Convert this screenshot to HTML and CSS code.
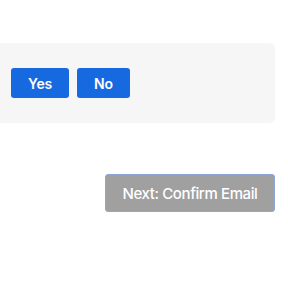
FILE: index.html
```html
<!DOCTYPE html>
<html>
<head>
<meta charset="utf-8">
<link rel="stylesheet" href="styles.css">
</head>
<body>
<div class="page">
  <div class="panel">
    <button class="btn choice yes">Yes</button>
    <button class="btn choice no">No</button>
  </div>
  <div class="footer">
    <button class="btn next" disabled>Next: Confirm Email</button>
  </div>
</div>
</body>
</html>
```
FILE: styles.css
```css
html, body {
  margin: 0;
  padding: 0;
  background: #ffffff;
  font-family: Inter, "Liberation Sans", sans-serif;
}
.page {
  width: 275px;
  padding-top: 43px;
}
.panel {
  margin-left: -10px;
  height: 80px;
  box-sizing: border-box;
  padding-left: 21px;
  background: #f6f6f6;
  border-radius: 5px;
  display: flex;
  align-items: center;
  gap: 8px;
}
.btn {
  font-family: Inter, "Liberation Sans", sans-serif;
  color: #ffffff;
  border: none;
  margin: 0;
  cursor: pointer;
}
.choice {
  height: 30px;
  background: #1769e0;
  border-radius: 3px;
  font-size: 14px;
  font-weight: 600;
  letter-spacing: -0.2px;
  padding: 0;
}
.yes { width: 58px; }
.no { width: 53px; }
.footer {
  display: flex;
  justify-content: flex-end;
  margin-top: 51px;
}
.next {
  width: 170px;
  height: 38px;
  background: #a0a0a0;
  border: 1px solid #8ea6d6;
  border-radius: 3px;
  font-size: 15px;
  font-weight: 500;
  letter-spacing: -0.4px;
  padding: 0;
}
```
